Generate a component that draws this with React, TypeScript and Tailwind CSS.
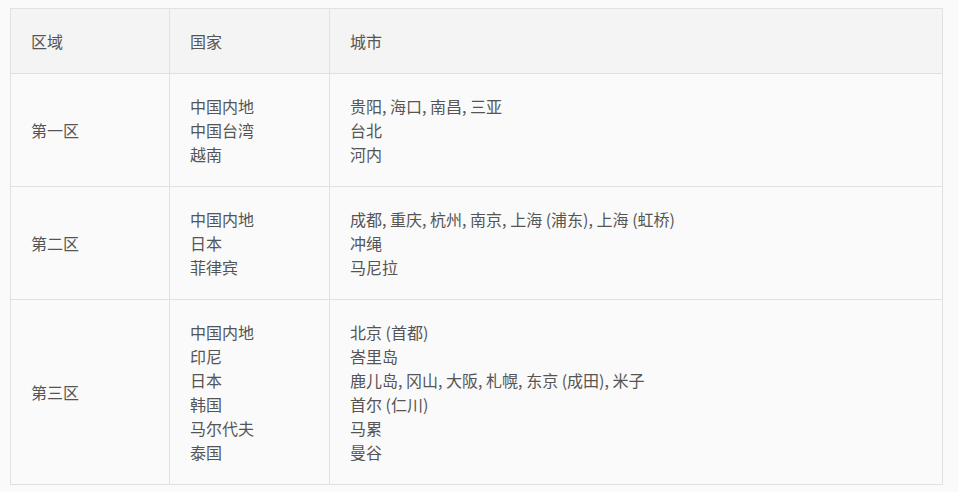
import React from "react";

const rows = [
  {
    zone: "第一区",
    countries: ["中国内地", "中国台湾", "越南"],
    cities: ["贵阳, 海口, 南昌, 三亚", "台北", "河内"],
  },
  {
    zone: "第二区",
    countries: ["中国内地", "日本", "菲律宾"],
    cities: ["成都, 重庆, 杭州, 南京, 上海 (浦东), 上海 (虹桥)", "冲绳", "马尼拉"],
  },
  {
    zone: "第三区",
    countries: ["中国内地", "印尼", "日本", "韩国", "马尔代夫", "泰国"],
    cities: [
      "北京 (首都)",
      "峇里岛",
      "鹿儿岛, 冈山, 大阪, 札幌, 东京 (成田), 米子",
      "首尔 (仁川)",
      "马累",
      "曼谷",
    ],
  },
];

export default function App() {
  return (
    <div
      className="w-[958px] h-[492px] bg-[#fafafa] pl-[10px] pt-[8px] text-[16px] leading-[24px] text-[#555555]"
      style={{ fontFamily: '"Noto Sans CJK SC", "Noto Sans", sans-serif' }}
    >
      <table className="w-[933px] border-collapse table-fixed">
        <colgroup>
          <col className="w-[159px]" />
          <col className="w-[160px]" />
          <col />
        </colgroup>
        <thead>
          <tr className="bg-[#f4f4f4]">
            <th className="border border-[#e1e1e1] px-[20px] py-[20px] text-left font-normal">区域</th>
            <th className="border border-[#e1e1e1] px-[20px] py-[20px] text-left font-normal">国家</th>
            <th className="border border-[#e1e1e1] px-[20px] py-[20px] text-left font-normal">城市</th>
          </tr>
        </thead>
        <tbody>
          {rows.map((r) => (
            <tr key={r.zone}>
              <td className="border border-[#e1e1e1] px-[20px] py-[20px] align-middle">{r.zone}</td>
              <td className="border border-[#e1e1e1] px-[20px] py-[20px] align-middle">
                {r.countries.map((c, i) => (
                  <div key={i}>{c}</div>
                ))}
              </td>
              <td className="border border-[#e1e1e1] px-[20px] py-[20px] align-middle">
                {r.cities.map((c, i) => (
                  <div key={i}>{c}</div>
                ))}
              </td>
            </tr>
          ))}
        </tbody>
      </table>
    </div>
  );
}
